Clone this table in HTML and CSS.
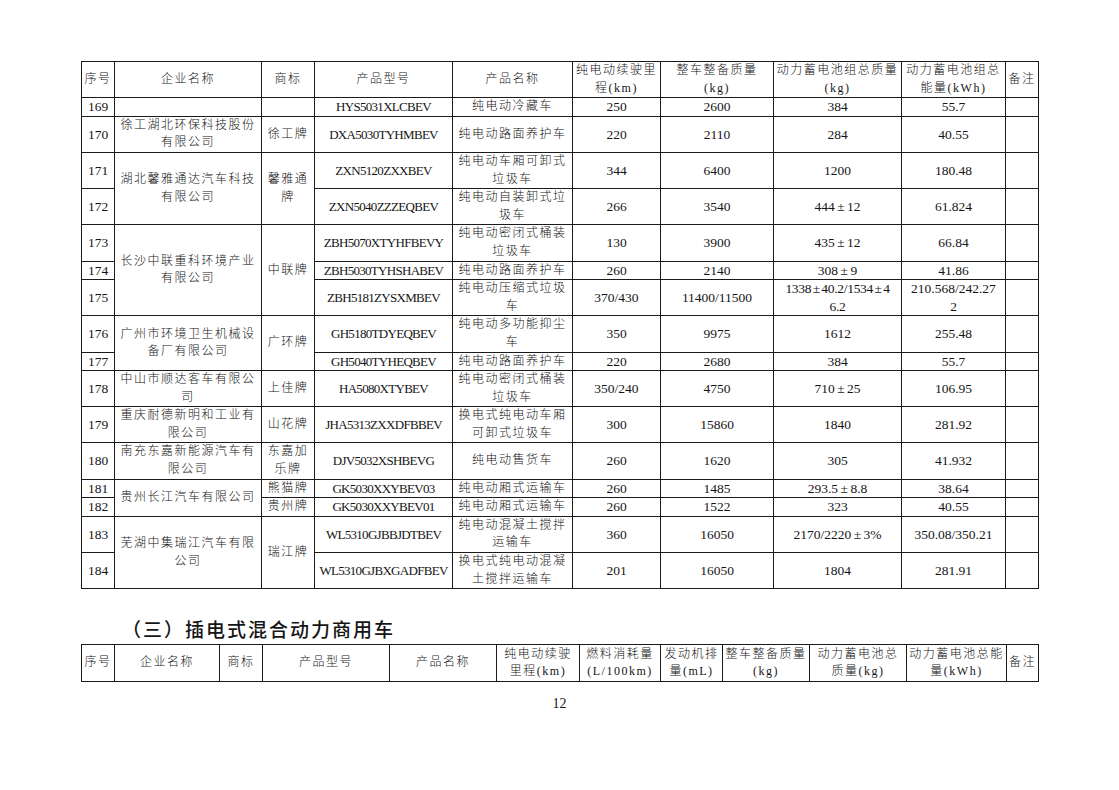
FILE: index.html
```html
<!DOCTYPE html>
<html lang="zh-CN">
<head>
<meta charset="utf-8">
<title>12</title>
<link rel="stylesheet" href="styles.css">
</head>
<body>
<div class="page">
<table class="grid t1">
<colgroup>
<col style="width:33px"><col style="width:147px"><col style="width:53px"><col style="width:138px"><col style="width:120px"><col style="width:88px"><col style="width:113px"><col style="width:128px"><col style="width:104px"><col style="width:33px">
</colgroup>
<thead>
<tr><th>序号</th><th>企业名称</th><th>商标</th><th>产品型号</th><th>产品名称</th><th>纯电动续驶里<br>程(km)</th><th>整车整备质量<br>(kg)</th><th>动力蓄电池组总质量<br>(kg)</th><th>动力蓄电池组总<br>能量(kWh)</th><th>备注</th></tr>
</thead>
<tbody>
<tr><td class="n">169</td><td></td><td></td><td class="m">HYS5031XLCBEV</td><td>纯电动冷藏车</td><td class="n">250</td><td class="n">2600</td><td class="n">384</td><td class="n">55.7</td><td></td></tr>
<tr><td class="n">170</td><td>徐工湖北环保科技股份<br>有限公司</td><td>徐工牌</td><td class="m">DXA5030TYHMBEV</td><td>纯电动路面养护车</td><td class="n">220</td><td class="n">2110</td><td class="n">284</td><td class="n">40.55</td><td></td></tr>
<tr><td class="n">171</td><td rowspan="2">湖北馨雅通达汽车科技<br>有限公司</td><td rowspan="2">馨雅通<br>牌</td><td class="m">ZXN5120ZXXBEV</td><td>纯电动车厢可卸式<br>垃圾车</td><td class="n">344</td><td class="n">6400</td><td class="n">1200</td><td class="n">180.48</td><td></td></tr>
<tr><td class="n">172</td><td class="m">ZXN5040ZZZEQBEV</td><td>纯电动自装卸式垃<br>圾车</td><td class="n">266</td><td class="n">3540</td><td class="n">444<span class="pm">±</span>12</td><td class="n">61.824</td><td></td></tr>
<tr><td class="n">173</td><td rowspan="3">长沙中联重科环境产业<br>有限公司</td><td rowspan="3">中联牌</td><td class="m">ZBH5070XTYHFBEVY</td><td>纯电动密闭式桶装<br>垃圾车</td><td class="n">130</td><td class="n">3900</td><td class="n">435<span class="pm">±</span>12</td><td class="n">66.84</td><td></td></tr>
<tr><td class="n">174</td><td class="m">ZBH5030TYHSHABEV</td><td>纯电动路面养护车</td><td class="n">260</td><td class="n">2140</td><td class="n">308<span class="pm">±</span>9</td><td class="n">41.86</td><td></td></tr>
<tr><td class="n">175</td><td class="m">ZBH5181ZYSXMBEV</td><td>纯电动压缩式垃圾<br>车</td><td class="n">370/430</td><td class="n">11400/11500</td><td class="n tight">1338<span class="pm">±</span>40.2/1534<span class="pm">±</span>4<br>6.2</td><td class="n">210.568/242.27<br>2</td><td></td></tr>
<tr><td class="n">176</td><td rowspan="2">广州市环境卫生机械设<br>备厂有限公司</td><td rowspan="2">广环牌</td><td class="m">GH5180TDYEQBEV</td><td>纯电动多功能抑尘<br>车</td><td class="n">350</td><td class="n">9975</td><td class="n">1612</td><td class="n">255.48</td><td></td></tr>
<tr><td class="n">177</td><td class="m">GH5040TYHEQBEV</td><td>纯电动路面养护车</td><td class="n">220</td><td class="n">2680</td><td class="n">384</td><td class="n">55.7</td><td></td></tr>
<tr><td class="n">178</td><td>中山市顺达客车有限公<br>司</td><td>上佳牌</td><td class="m">HA5080XTYBEV</td><td>纯电动密闭式桶装<br>垃圾车</td><td class="n">350/240</td><td class="n">4750</td><td class="n">710<span class="pm">±</span>25</td><td class="n">106.95</td><td></td></tr>
<tr><td class="n">179</td><td>重庆耐德新明和工业有<br>限公司</td><td>山花牌</td><td class="m">JHA5313ZXXDFBBEV</td><td>换电式纯电动车厢<br>可卸式垃圾车</td><td class="n">300</td><td class="n">15860</td><td class="n">1840</td><td class="n">281.92</td><td></td></tr>
<tr><td class="n">180</td><td>南充东嘉新能源汽车有<br>限公司</td><td>东嘉加<br>乐牌</td><td class="m">DJV5032XSHBEVG</td><td>纯电动售货车</td><td class="n">260</td><td class="n">1620</td><td class="n">305</td><td class="n">41.932</td><td></td></tr>
<tr><td class="n">181</td><td rowspan="2">贵州长江汽车有限公司</td><td>熊猫牌</td><td class="m">GK5030XXYBEV03</td><td>纯电动厢式运输车</td><td class="n">260</td><td class="n">1485</td><td class="n">293.5<span class="pm">±</span>8.8</td><td class="n">38.64</td><td></td></tr>
<tr><td class="n">182</td><td>贵州牌</td><td class="m">GK5030XXYBEV01</td><td>纯电动厢式运输车</td><td class="n">260</td><td class="n">1522</td><td class="n">323</td><td class="n">40.55</td><td></td></tr>
<tr><td class="n">183</td><td rowspan="2">芜湖中集瑞江汽车有限<br>公司</td><td rowspan="2">瑞江牌</td><td class="m">WL5310GJBBJDTBEV</td><td>纯电动混凝土搅拌<br>运输车</td><td class="n">360</td><td class="n">16050</td><td class="n">2170/2220<span class="pm">±</span>3%</td><td class="n">350.08/350.21</td><td></td></tr>
<tr><td class="n">184</td><td class="m">WL5310GJBXGADFBEV</td><td>换电式纯电动混凝<br>土搅拌运输车</td><td class="n">201</td><td class="n">16050</td><td class="n">1804</td><td class="n">281.91</td><td></td></tr>
</tbody>
</table>

<h2 class="section">（三）插电式混合动力商用车</h2>

<table class="grid t2">
<colgroup>
<col style="width:33px"><col style="width:105px"><col style="width:43px"><col style="width:127px"><col style="width:107px"><col style="width:83px"><col style="width:81px"><col style="width:62px"><col style="width:87px"><col style="width:97px"><col style="width:100px"><col style="width:32px">
</colgroup>
<thead>
<tr><th>序号</th><th>企业名称</th><th>商标</th><th>产品型号</th><th>产品名称</th><th>纯电动续驶<br>里程(km)</th><th>燃料消耗量<br>(L/100km)</th><th>发动机排<br>量(mL)</th><th>整车整备质量<br>(kg)</th><th>动力蓄电池总<br>质量(kg)</th><th>动力蓄电池总能<br>量(kWh)</th><th>备注</th></tr>
</thead>
</table>

<div class="pageno">12</div>
</div>
</body>
</html>
```

FILE: styles.css
```css
html, body {
  margin: 0;
  padding: 0;
  background: #ffffff;
}

.page {
  width: 1119px;
  padding: 61px 0 0 81px;
  box-sizing: border-box;
  font-family: "Liberation Serif", "Noto Sans CJK SC", serif;
  color: #151515;
}

.grid {
  border-collapse: collapse;
  table-layout: fixed;
  width: 957px;
}

.grid th,
.grid td {
  border: 1px solid #1a1a1a;
  padding: 0 1px;
  font-size: 12px;
  font-weight: 300;
  line-height: 17.6px;
  letter-spacing: 1.5px;
  text-align: center;
  vertical-align: middle;
  white-space: nowrap;
}

.grid th {
  font-weight: 300;
}

.t1 thead th {
  height: 35px;
}

.grid td.n {
  font-size: 13.5px;
  letter-spacing: 0;
  font-weight: 400;
}

.grid td.tight {
  letter-spacing: -0.3px;
}

.pm {
  padding: 0 2.5px;
}

.grid td.tight .pm {
  padding: 0 1.5px;
}

.grid td.m {
  font-size: 13px;
  letter-spacing: -0.7px;
  font-weight: 400;
}

.section {
  margin: 29px 0 0 41px;
  height: 26px;
  font-size: 19px;
  line-height: 26px;
  font-weight: 500;
  letter-spacing: 2px;
}

.t2 thead th {
  height: 36px;
}

.pageno {
  width: 957px;
  margin-top: 12px;
  text-align: center;
  font-size: 14px;
  line-height: 20px;
}
```
